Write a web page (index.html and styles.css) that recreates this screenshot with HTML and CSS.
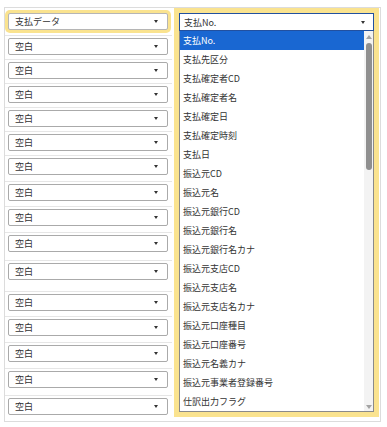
FILE: index.html
```html
<!DOCTYPE html>
<html lang="ja">
<head>
  <meta charset="UTF-8" />
  <meta name="viewport" content="width=device-width, initial-scale=1" />
  <title>項目マッピング</title>
  <link rel="stylesheet" href="styles.css">
</head>
<body>
  <div class="sheet">
    <!-- left: source columns -->
    <div class="sources">
      <div class="row"><div class="select picked"><span>支払データ</span><i class="caret"></i></div></div>
      <div class="row"><div class="select"><span>空白</span><i class="caret"></i></div></div>
      <div class="row"><div class="select"><span>空白</span><i class="caret"></i></div></div>
      <div class="row"><div class="select"><span>空白</span><i class="caret"></i></div></div>
      <div class="row"><div class="select"><span>空白</span><i class="caret"></i></div></div>
      <div class="row"><div class="select"><span>空白</span><i class="caret"></i></div></div>
      <div class="row"><div class="select"><span>空白</span><i class="caret"></i></div></div>
      <div class="row"><div class="select"><span>空白</span><i class="caret"></i></div></div>
      <div class="row"><div class="select"><span>空白</span><i class="caret"></i></div></div>
      <div class="row"><div class="select"><span>空白</span><i class="caret"></i></div></div>
      <div class="row"><div class="select"><span>空白</span><i class="caret"></i></div></div>
      <div class="row"><div class="select"><span>空白</span><i class="caret"></i></div></div>
      <div class="row"><div class="select"><span>空白</span><i class="caret"></i></div></div>
      <div class="row"><div class="select"><span>空白</span><i class="caret"></i></div></div>
      <div class="row"><div class="select"><span>空白</span><i class="caret"></i></div></div>
      <div class="row"><div class="select"><span>空白</span><i class="caret"></i></div></div>
    </div>

    <!-- right: open field dropdown -->
    <div class="target">
      <div class="picker">
        <div class="select open"><span>支払No.</span><i class="caret"></i></div>
        <div class="list">
          <ul class="options">
            <li class="active">支払No.</li>
            <li>支払先区分</li>
            <li>支払確定者CD</li>
            <li>支払確定者名</li>
            <li>支払確定日</li>
            <li>支払確定時刻</li>
            <li>支払日</li>
            <li>振込元CD</li>
            <li>振込元名</li>
            <li>振込元銀行CD</li>
            <li>振込元銀行名</li>
            <li>振込元銀行名カナ</li>
            <li>振込元支店CD</li>
            <li>振込元支店名</li>
            <li>振込元支店名カナ</li>
            <li>振込元口座種目</li>
            <li>振込元口座番号</li>
            <li>振込元名義カナ</li>
            <li>振込元事業者登録番号</li>
            <li>仕訳出力フラグ</li>
          </ul>
          <div class="scrollbar">
            <i class="arrow up"></i>
            <div class="thumb"></div>
            <i class="arrow down"></i>
          </div>
        </div>
      </div>
    </div>
  </div>
</body>
</html>
```

FILE: styles.css
```css
/* Reset and base */
* {
  box-sizing: border-box;
  margin: 0;
  padding: 0;
}
body {
  background: #fff;
  color: #333;
  font-family: "Noto Sans CJK JP", "Noto Sans", sans-serif;
  font-size: 9px;
}
.sheet {
  margin: 7px 0 0 4px;
  width: 377px;
  height: 415px;
  border: 1px solid #dcdcdc;
  display: grid;
  grid-template-columns: 167px 1fr;
}

/* left column */
.sources {
  padding-top: 2px;
  display: grid;
  grid-template-rows: 25px 24px 24px 24px 24px 24px 26px 25px 26px 28px 31px 25px 26px 26px 27px 24px;
}
.row {
  padding: 3px 0 0 3px;
  border-top: 1px solid #e6e6e6;
}
.row:first-child {
  border-top: none;
}
.row + .row {
  padding-top: 2px;
}
.select {
  display: flex;
  align-items: center;
  justify-content: space-between;
  width: 160px;
  height: 17px;
  padding: 0 9px 0 6px;
  border: 1px solid #aaa;
  border-radius: 2px;
  background: #fff;
  white-space: nowrap;
}
.select.picked {
  box-shadow: 0 0 0 3px #fae38f;
  border-color: #b5b5b5;
}
.caret {
  width: 0;
  height: 0;
  border-left: 2.5px solid transparent;
  border-right: 2.5px solid transparent;
  border-top: 3px solid #333;
}

/* right column */
.target {
  padding: 0 0 0 2px;
}
.picker {
  width: 205px;
  height: 409px;
  border: 5px solid #fae38f;
  display: flex;
  flex-direction: column;
}
.select.open {
  width: 100%;
  height: 18px;
  padding: 0 8px 0 4px;
  border: 1px solid #22509f;
  border-radius: 0;
}
.list {
  flex: 1;
  display: flex;
  border: 1px solid #8a8a8a;
  border-top: none;
  background: #fff;
}
.options {
  flex: 1;
  list-style: none;
}
.options li {
  height: 19px;
  line-height: 19px;
  padding-left: 3px;
  white-space: nowrap;
}
.options li.active {
  background: #1967d2;
  color: #fff;
}
.scrollbar {
  width: 9px;
  background: #f3f3f3;
  display: flex;
  flex-direction: column;
  align-items: center;
}
.arrow {
  width: 0;
  height: 0;
  border-left: 3px solid transparent;
  border-right: 3px solid transparent;
}
.arrow.up {
  margin-top: 4px;
  border-bottom: 4px solid #a3a3a3;
}
.arrow.down {
  margin: auto 0 2px;
  border-top: 4px solid #a3a3a3;
}
.thumb {
  margin-top: 4px;
  width: 6px;
  height: 127px;
  border-radius: 3px;
  background: #8f8f8f;
}
```
